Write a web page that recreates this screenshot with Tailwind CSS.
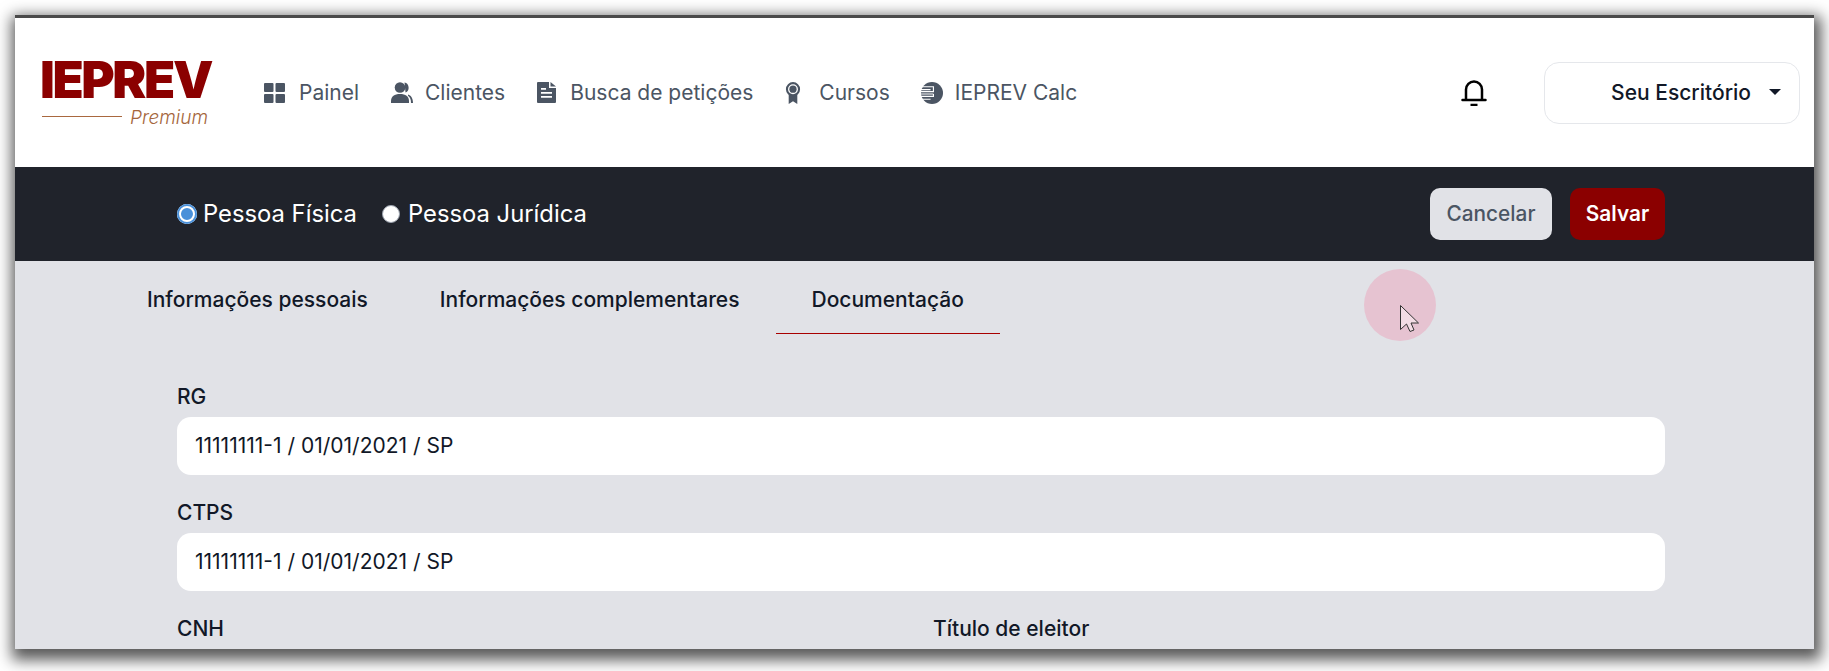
<!DOCTYPE html>
<html lang="en">
<head>
  <meta charset="UTF-8" />
  <title>IEPREV Premium</title>
  <script src="https://cdn.jsdelivr.net/npm/@tailwindcss/browser@4"></script>
</head>
<body class="bg-white h-[671px] overflow-hidden font-['Inter',sans-serif]">

  <!-- Captured window -->
  <div class="relative ml-[15px] mt-[15px] w-[1799px] h-[634px] overflow-hidden border-t-[3px] border-[#4a4a4a] bg-[#e1e2e7]">

    <!-- Header -->
    <header class="h-[149px] bg-white flex items-center pl-[25px] pr-[14px]">
      <div class="w-[224px] shrink-0 mt-[4px]">
        <div class="text-[#8b0000] text-[51px] leading-[40px] font-black tracking-[-2.4px] h-[40px]">IEPREV</div>
        <div class="flex items-center mt-[4px] ml-[2px]">
          <div class="w-[80px] h-px bg-[#a9683f]"></div>
          <span class="ml-[8px] pt-[3px] text-[#a5663c] text-[19px] leading-[22px] italic font-light">Premium</span>
        </div>
      </div>

      <nav class="flex items-center text-[21px] text-[#4b5563] gap-[32px]">
        <a class="flex items-center gap-[14px]">
          <svg class="w-[21px] h-[20px]" viewBox="0 0 21 20" fill="#4b5563"><rect width="9.500" height="9" rx="1"/><rect x="11.500" width="9.500" height="9" rx="1"/><rect y="11" width="9.500" height="9" rx="1"/><rect x="11.500" y="11" width="9.500" height="9" rx="1"/></svg>
          Painel
        </a>
        <a class="flex items-center gap-[12px]">
          <svg class="w-[22px] h-[21px]" viewBox="0 0 22 21" fill="#4b5563"><circle cx="9" cy="5.500" r="5.300"/><path d="M0 21v-2c0-4.500 3.500-7 9-7s9 2.500 9 7v2z"/><path d="M13.500 .6a5.300 5.300 0 0 1 1 10M17 12.500c3 1 5 3.500 5 8.500h-2c0-3.500-1-6-3-7.200z"/></svg>
          Clientes
        </a>
        <a class="flex items-center gap-[14px]">
          <svg class="w-[19px] h-[21px]" viewBox="0 0 19 21"><path fill="#4b5563" d="M1 0h11v6h7v14a1 1 0 0 1-1 1H1a1 1 0 0 1-1-1V1a1 1 0 0 1 1-1zM13.500 0 19 4.500h-5.500z"/><path fill="#fff" d="M4 6h5v1.800H4zM4 10h11v1.800H4zM4 14h11v1.800H4z"/></svg>
          Busca de petições
        </a>
        <a class="flex items-center gap-[18px]">
          <svg class="w-[16px] h-[22px]" viewBox="0 0 15 23"><path fill="#4b5563" d="M3 12.500V23l4.500-3 4.500 3V12.500z"/><circle cx="7.500" cy="7.500" r="6.300" fill="#fff" stroke="#4b5563" stroke-width="2.200"/><circle cx="7.500" cy="7.500" r="3.800" fill="#4b5563"/></svg>
          Cursos
        </a>
        <a class="flex items-center gap-[12px] -ml-[1px]">
          <svg class="w-[22px] h-[22px]" viewBox="0 0 23 23"><circle cx="11.500" cy="11.500" r="11.500" fill="#4b5563"/><path fill="none" stroke="#fff" stroke-width="1.200" d="M0 5h13v5H0M0 8h10M0 12.500h13M0 15h13v-2.500M0 18h10"/></svg>
          IEPREV Calc
        </a>
      </nav>

      <div class="ml-auto flex items-center">
        <svg class="w-[26px] h-[27px] mr-[57px]" viewBox="0 0 26 27" fill="none" stroke="#000" stroke-width="2.500"><path d="M5 21V10.500a8 8 0 0 1 16 0V21"/><path d="M1.500 21h23" stroke-linecap="round"/><path d="M9.500 26h7"/></svg>
        <button class="w-[256px] h-[62px] rounded-[15px] border border-[#e5e7eb] flex items-center justify-end pr-[18px] text-[21px] font-medium text-[#111827]">
          Seu Escritório
          <span class="ml-[18px] mt-[-1px] w-0 h-0 border-x-[6px] border-x-transparent border-t-[6px] border-t-[#111827]"></span>
        </button>
      </div>
    </header>

    <!-- Person type bar -->
    <div class="h-[94px] bg-[#20232b] flex items-center justify-between pl-[162px] pr-[149px]">
      <div class="flex items-center text-white text-[23.800px]">
        <label class="flex items-center gap-[6px]">
          <span class="w-[20px] h-[20px] rounded-full bg-[#4a90d9] shadow-[inset_0_0_0_2px_#4a90d9,inset_0_0_0_4px_#ffffff]"></span>
          Pessoa Física
        </label>
        <label class="flex items-center gap-[8px] ml-[25px]">
          <span class="w-[18px] h-[18px] rounded-full bg-white border border-[#9ca3af]"></span>
          Pessoa Jurídica
        </label>
      </div>
      <div class="flex items-center gap-[18px] text-[20.8px]">
        <button class="w-[122px] h-[52px] rounded-[10px] bg-[#e1e2e7] text-[#4b5563] font-medium">Cancelar</button>
        <button class="w-[95px] h-[52px] rounded-[10px] bg-[#8b0000] text-white font-semibold">Salvar</button>
      </div>
    </div>

    <!-- Tabs -->
    <div class="flex pl-[96px] h-[73px] text-[21px] font-medium text-[#111827]">
      <a class="px-[36px] pt-[23px]">Informações pessoais</a>
      <a class="px-[36px] pt-[23px]">Informações complementares</a>
      <a class="px-[36px] pt-[23px] border-b border-[#a80000]">Documentação</a>
    </div>

    <!-- Documents form -->
    <form class="pl-[162px] pr-[149px] pt-[52px] text-[21px] text-[#111827]">
      <label class="block font-medium leading-[22px]">RG</label>
      <div class="mt-[9px] h-[58px] rounded-[14px] bg-white flex items-center px-[18px]">11111111-1 / 01/01/2021 / SP</div>
      <label class="block font-medium leading-[22px] mt-[27px]">CTPS</label>
      <div class="mt-[9px] h-[58px] rounded-[14px] bg-white flex items-center px-[18px]">11111111-1 / 01/01/2021 / SP</div>
      <div class="grid grid-cols-2 gap-[24px] mt-[27px] font-medium leading-[22px]">
        <label>CNH</label>
        <label>Título de eleitor</label>
      </div>
    </form>

    <!-- Cursor highlight -->
    <div class="absolute left-[1349px] top-[251px] w-[72px] h-[72px] rounded-full bg-[#e6c3d1]">
      <svg class="absolute left-[36px] top-[36px] w-[19px] h-[27px]" viewBox="0 0 19 27"><path d="M.5.5v24l6-5.500 3.500 7.500 4-1.500-3-7h7.500z" fill="#f3dde5" stroke="#333" stroke-width="1"/></svg>
    </div>
  </div>

  <!-- Window shadow, drawn behind the capture -->
  <div class="absolute -z-10 left-[15px] top-[15px] w-[1799px] h-[634px] shadow-[2px_6px_14px_5px_rgba(0,0,0,0.65)]"></div>
</body>
</html>
